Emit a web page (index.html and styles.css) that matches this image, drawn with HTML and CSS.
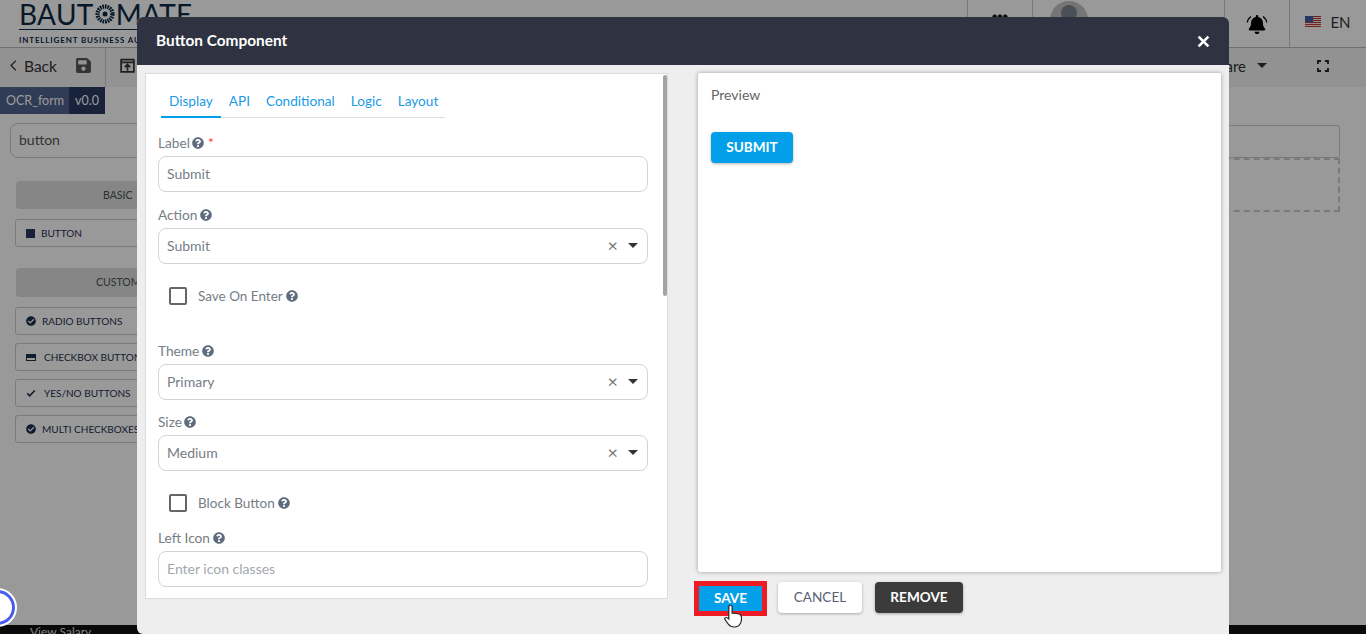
FILE: index.html
```html
<!DOCTYPE html>
<html>
  <head>
    <meta charset="utf-8">
    <title>Button Component</title>
    <link rel="stylesheet" href="styles.css">
  </head>
  <body>
    <svg class="sprites" width="0" height="0">
      <symbol id="help" viewBox="0 0 512 512"><path d="M504 256c0 136.997-111.043 248-248 248S8 392.997 8 256C8 119.083 119.043 8 256 8s248 111.083 248 248zM262.655 90c-54.497 0-89.255 22.957-116.549 63.758-3.536 5.286-2.353 12.415 2.715 16.258l34.699 26.31c5.205 3.947 12.621 3.008 16.665-2.122 17.864-22.658 30.113-35.797 57.303-35.797 20.429 0 45.698 13.148 45.698 32.958 0 14.976-12.363 22.667-32.534 33.976C247.128 238.528 216 254.941 216 296v4c0 6.627 5.373 12 12 12h56c6.627 0 12-5.373 12-12v-1.333c0-28.462 83.186-29.647 83.186-106.667 0-58.002-60.165-102-116.531-102zM256 338c-25.365 0-46 20.635-46 46 0 25.364 20.635 46 46 46s46-20.636 46-46c0-25.365-20.635-46-46-46z"/></symbol>
      <symbol id="check-circle" viewBox="0 0 512 512"><path d="M504 256c0 136.967-111.033 248-248 248S8 392.967 8 256 119.033 8 256 8s248 111.033 248 248zM227.314 387.314l184-184c6.248-6.248 6.248-16.379 0-22.627l-22.627-22.627c-6.248-6.249-16.379-6.249-22.628 0L216 308.118l-70.059-70.059c-6.248-6.248-16.379-6.248-22.628 0l-22.627 22.627c-6.248 6.248-6.248 16.379 0 22.627l104 104c6.249 6.249 16.379 6.249 22.628 0z"/></symbol>
    </svg>

    <div class="page">
      <header class="topbar">
        <div class="logo">
          <div class="logo-name">BAUT<svg class="logo-gear" viewBox="0 0 24 24"><circle cx="12" cy="12" r="9" fill="none" stroke="#0c2a45" stroke-width="5" stroke-dasharray="2 1"/><circle cx="12" cy="12" r="3" fill="#0c2a45"/></svg>MATE</div>
          <div class="logo-rule"></div>
          <div class="logo-tag">INTELLIGENT BUSINESS AUTOMATION</div>
        </div>
        <div class="top-cell top-apps"><span class="dots"></span></div>
        <div class="top-cell top-user">
          <svg class="avatar" viewBox="0 0 38 38"><circle cx="19" cy="19" r="19" fill="#c4c4c4"/><ellipse cx="19" cy="12" rx="8" ry="8" fill="#7c8590"/><path d="M6 30c2-8 24-8 26 0v8H6z" fill="#7c8590"/></svg>
        </div>
        <div class="top-cell top-bell">
          <svg class="bell" viewBox="-90 0 628 512">
            <path d="M224 512c35.320 0 63.970-28.650 63.970-64H160.030c0 35.350 28.650 64 63.970 64zm215.390-149.710c-19.320-20.760-55.470-51.990-55.470-154.290 0-77.700-54.480-139.900-127.940-155.160V32c0-17.670-14.320-32-31.980-32s-31.980 14.330-31.980 32v20.840C118.560 68.100 64.080 130.300 64.080 208c0 102.300-36.150 133.530-55.470 154.290-6 6.450-8.660 14.160-8.610 21.710.11 16.400 12.980 32 32.100 32h383.800c19.120 0 32-15.600 32.100-32 .05-7.550-2.610-15.270-8.610-21.710z"/>
            <path d="M60 40C10 80-30 130-40 200M388 40c50 40 90 90 100 160" fill="none" stroke="#000" stroke-width="36"/>
          </svg>
        </div>
        <div class="top-cell top-lang"><span class="flag"><span class="flag-canton"></span></span>EN</div>
      </header>

      <div class="toolbar">
        <div class="tool-left">
          <svg class="chev" viewBox="0 0 10 16"><path d="M8 2 2 8l6 6" fill="none" stroke="#333" stroke-width="1.600"/></svg>
          <span class="back">Back</span>
          <svg class="save" viewBox="0 0 448 512"><path d="M433.941 129.941l-83.882-83.882A48 48 0 0 0 316.118 32H48C21.490 32 0 53.490 0 80v352c0 26.510 21.490 48 48 48h352c26.510 0 48-21.490 48-48V163.882a48 48 0 0 0-14.059-33.941zM224 416c-35.346 0-64-28.654-64-64 0-35.346 28.654-64 64-64s64 28.654 64 64c0 35.346-28.654 64-64 64zm96-304.520V212c0 6.627-5.373 12-12 12H76c-6.627 0-12-5.373-12-12V108c0-6.627 5.373-12 12-12h228.520c3.183 0 6.235 1.264 8.485 3.515l3.480 3.480A11.996 11.996 0 0 1 320 111.480z"/></svg>
        </div>
        <svg class="publish" viewBox="0 0 16 16"><path d="M2 5V2.500h12V14H2V5zm0 0h12M8 13V7M5.500 9.500 8 7l2.500 2.500" fill="none" stroke="#333" stroke-width="1.600"/></svg>
        <div class="tool-right">
          <span class="share">Share</span>
          <span class="caret"></span>
          <svg class="fullscreen" viewBox="0 0 12 12"><path d="M1 4V1h3M8 1h3v3M11 8v3H8M4 11H1V8" fill="none" stroke="#222" stroke-width="1.800"/></svg>
        </div>
      </div>

      <div class="crumbs">
        <span class="crumb-name">OCR_form</span>
        <span class="crumb-version">v0.0</span>
      </div>

      <main class="builder">
        <aside class="palette">
          <div class="palette-search">button</div>
          <div class="palette-head">BASIC</div>
          <div class="palette-item"><span class="item-square"></span>BUTTON</div>
          <div class="palette-head palette-gap">CUSTOM</div>
          <div class="palette-item"><svg class="item-icon"><use href="#check-circle"/></svg>RADIO BUTTONS</div>
          <div class="palette-item item-wide"><span class="item-list"></span>CHECKBOX BUTTONS</div>
          <div class="palette-item item-wide"><svg class="item-icon" viewBox="0 0 12 12"><path d="M1.500 6.500 4.500 9.500 10.500 3" fill="none" stroke="#1f2f4f" stroke-width="2"/></svg>YES/NO BUTTONS</div>
          <div class="palette-item"><svg class="item-icon"><use href="#check-circle"/></svg>MULTI CHECKBOXES</div>
        </aside>
        <section class="canvas">
          <div class="canvas-title"></div>
          <div class="canvas-drop"></div>
        </section>
      </main>

      <footer class="footer">View Salary</footer>
    </div>

    <div class="backdrop"></div>
    <div class="assistant"></div>

    <div class="modal">
      <div class="modal-head">
        <span class="modal-title">Button Component</span>
        <svg class="modal-close" viewBox="0 0 12 12"><path d="M1.500 1.500l9 9M10.500 1.500l-9 9" stroke="#fff" stroke-width="2.400"/></svg>
      </div>
      <div class="modal-body">
        <div class="settings">
          <span class="scrollbar"></span>
          <nav class="tabs">
            <a class="tab active">Display</a>
            <a class="tab">API</a>
            <a class="tab">Conditional</a>
            <a class="tab">Logic</a>
            <a class="tab">Layout</a>
          </nav>

          <div class="field first">
            <label class="label">Label <svg class="help"><use href="#help"/></svg> <span class="req">*</span></label>
            <div class="input">Submit</div>
          </div>
          <div class="field">
            <label class="label">Action <svg class="help"><use href="#help"/></svg></label>
            <div class="input select">Submit<span class="clear">×</span><span class="arrow"></span></div>
          </div>
          <div class="check check-save"><span class="box"></span>Save On Enter <svg class="help"><use href="#help"/></svg></div>
          <div class="field">
            <label class="label">Theme <svg class="help"><use href="#help"/></svg></label>
            <div class="input select">Primary<span class="clear">×</span><span class="arrow"></span></div>
          </div>
          <div class="field tight">
            <label class="label">Size <svg class="help"><use href="#help"/></svg></label>
            <div class="input select">Medium<span class="clear">×</span><span class="arrow"></span></div>
          </div>
          <div class="check check-block"><span class="box"></span>Block Button <svg class="help"><use href="#help"/></svg></div>
          <div class="field">
            <label class="label">Left Icon <svg class="help"><use href="#help"/></svg></label>
            <div class="input placeholder">Enter icon classes</div>
          </div>
        </div>

        <div class="side">
          <div class="preview">
            <div class="preview-title">Preview</div>
            <button class="btn btn-primary btn-submit">SUBMIT</button>
          </div>
          <div class="actions">
            <div class="save-mark"><button class="btn btn-primary btn-save">SAVE</button></div>
            <button class="btn btn-cancel">CANCEL</button>
            <button class="btn btn-remove">REMOVE</button>
          </div>
        </div>
      </div>
    </div>

    <svg class="cursor" viewBox="0 0 15 24" preserveAspectRatio="none"><path d="M4.500 1.500c1-.7 2.300 0 2.300 1.300v6.500c1.800-.4 6.200.3 7.200 1.800 1 2 .8 6.500-.5 8.600-.7 2-2.800 3.300-5 3.300-2.500 0-4-1.300-5-3L.8 15.500c-.8-1.300.8-2.600 2-1.600l1.200 1.100V2.800c0-.5.100-1 .5-1.300z" fill="#fff" stroke="#222" stroke-width="1"/></svg>
  </body>
</html>
```

FILE: styles.css
```css
* {
  box-sizing: border-box;
}

html,
body {
  height: 100%;
  margin: 0;
  overflow: hidden;
}

body {
  font-family: "Lato", "Noto Sans", sans-serif;
  font-size: 14px;
  color: #555;
  background: #fff;
}

.sprites {
  position: absolute;
}

/* page behind the dialog */

.page {
  display: flex;
  flex-direction: column;
  height: 634px;
}

.topbar {
  display: flex;
  height: 48px;
  flex: none;
  border-bottom: 1px solid #bbb;
}

.logo {
  width: 967px;
  padding: 0 0 0 19px;
  overflow: hidden;
  color: #0c2a45;
}

.logo-name {
  display: flex;
  align-items: center;
  height: 30px;
  margin-top: -1px;
  font-size: 28px;
  letter-spacing: .3px;
}

.logo-gear {
  width: 20px;
  height: 20px;
  margin: 0 1px;
}

.logo-rule {
  width: 200px;
  height: 1px;
  background: #0c2a45;
}

.logo-tag {
  margin-top: 5px;
  font-size: 8px;
  font-weight: 700;
  letter-spacing: .85px;
}

.top-cell {
  display: flex;
  align-items: center;
  justify-content: center;
  border-left: 1px solid #c8c8c8;
}

.top-apps {
  width: 65px;
}

.dots {
  width: 16px;
  height: 16px;
  margin-bottom: 4px;
  background: radial-gradient(circle, #111 2px, transparent 2.500px) 0 0 / 5.300px 5.300px;
}

.top-user {
  width: 192px;
  justify-content: flex-start;
  padding-left: 17px;
}

.avatar {
  width: 38px;
  height: 38px;
  margin-top: -8px;
}

.top-bell {
  width: 65px;
}

.bell {
  width: 24px;
  height: 19px;
  margin-top: 2px;
  fill: #000;
}

.top-lang {
  flex: 1;
  gap: 9px;
  padding-bottom: 4px;
  font-size: 15px;
  color: #333;
}

.flag {
  position: relative;
  width: 16px;
  height: 11px;
  background: repeating-linear-gradient(#c0392b 0 1px, #eee 1px 2px);
}

.flag-canton {
  position: absolute;
  left: 0;
  top: 0;
  width: 8px;
  height: 6px;
  background: #3c5aa6;
}

.toolbar {
  display: flex;
  align-items: center;
  height: 39px;
  flex: none;
  background: #f4f4f4;
  color: #333;
}

.tool-left {
  display: flex;
  align-items: center;
  width: 106px;
  height: 100%;
  padding: 0 0 4px 9px;
  border-right: 1px solid #ccc;
}

.chev {
  width: 9px;
  height: 13px;
}

.back {
  margin-left: 6px;
  font-size: 15.500px;
}

.save {
  width: 15px;
  height: 17px;
  margin-left: 19px;
  fill: #555;
}

.publish {
  width: 17px;
  height: 17px;
  margin: 0 0 4px 13px;
}

.tool-right {
  display: flex;
  align-items: center;
  margin: 0 0 4px auto;
  padding-right: 37px;
}

.share {
  font-size: 15px;
}

.caret {
  width: 0;
  height: 0;
  margin-left: 11px;
  border: 5px solid transparent;
  border-top-color: #333;
  border-bottom-width: 0;
}

.fullscreen {
  width: 12px;
  height: 12px;
  margin-left: 50px;
}

.crumbs {
  display: flex;
  height: 27px;
  flex: none;
  line-height: 27px;
  color: #fff;
  font-size: 12.500px;
}

.crumb-name {
  width: 69px;
  padding-left: 6px;
  background: #50658f;
  white-space: nowrap;
}

.crumb-version {
  width: 36px;
  text-align: center;
  background: #2a3a63;
}

.builder {
  display: flex;
  flex: 1;
  min-height: 0;
}

.palette {
  width: 300px;
  padding: 9px 0 0 10px;
  font-size: 10px;
  color: #1f2f4f;
}

.palette-search {
  height: 35px;
  margin-bottom: 23px;
  padding-left: 8px;
  border: 1px solid #ccc;
  border-radius: 8px;
  font-size: 14px;
  line-height: 31px;
  color: #555;
}

.palette-head {
  height: 28px;
  margin: 0 0 10px 6px;
  border-radius: 4px;
  background: #e0e0e0;
  font-size: 10.500px;
  line-height: 28px;
  padding-left: 87px;
  color: #455;
}

.palette-gap {
  margin-top: 21px;
  margin-bottom: 10px;
  height: 29px;
  padding-left: 80px;
}

.palette-item {
  display: flex;
  align-items: center;
  gap: 6px;
  height: 28px;
  margin: 0 0 8px 5px;
  padding-left: 10px;
  border: 1px solid #ccc;
  border-radius: 3px;
}

.item-wide {
  gap: 8px;
}

.item-square {
  width: 9px;
  height: 9px;
  background: #2a3a63;
}

.item-icon {
  width: 10px;
  height: 10px;
  fill: #1f2f4f;
}

.item-list {
  width: 10px;
  height: 7px;
  border: 1px solid #1f2f4f;
  border-top-width: 2px;
  background: linear-gradient(#1f2f4f 0 2px, transparent 2px);
}

.canvas {
  flex: 1;
  padding: 11px 26px 0 0;
}

.canvas-title {
  height: 33px;
  border: 1px solid #ccc;
  border-radius: 3px;
}

.canvas-drop {
  height: 54px;
  border: 2px dashed #ccc;
}

.footer {
  height: 9px;
  flex: none;
  padding-left: 30px;
  background: #111;
  color: #ddd;
  font-size: 12px;
  line-height: 14px;
  overflow: hidden;
}

/* overlay parts */

.backdrop {
  position: fixed;
  top: 0;
  right: 0;
  bottom: 0;
  left: 0;
  background: rgba(0, 0, 0, .4);
}

.assistant {
  position: fixed;
  left: -20px;
  top: 590px;
  width: 35px;
  height: 35px;
  border: 3px solid #4a5cf0;
  border-radius: 50%;
  background: #fff;
  box-shadow: 0 0 0 2px #fff;
}

.modal {
  position: fixed;
  left: 137px;
  top: 17px;
  width: 1092px;
  height: 617px;
  border-radius: 6px 6px 0 6px;
  background: #eee;
  overflow: hidden;
}

.modal-head {
  display: flex;
  align-items: center;
  justify-content: space-between;
  height: 48px;
  padding: 0 19px;
  background: #2f3240;
  color: #fff;
}

.modal-title {
  margin-bottom: 2px;
  font-size: 15.400px;
  font-weight: 700;
}

.modal-close {
  width: 13px;
  height: 13px;
}

.modal-body {
  display: flex;
  align-items: flex-start;
  padding: 8px 8px 0;
  gap: 30px;
}

.settings {
  position: relative;
  width: 523px;
  height: 526px;
  flex: none;
  padding: 0 19px 0 12px;
  border: 1px solid #ddd;
  background: #fff;
  overflow: hidden;
  color: #767d85;
}

.scrollbar {
  position: absolute;
  right: 0;
  top: 1px;
  width: 4px;
  height: 221px;
  border-radius: 2px;
  background: #a3a3a3;
}

.tabs {
  display: flex;
  width: 284px;
  height: 35px;
  margin: 9px 0 0 3px;
  border-bottom: 1px solid #ddd;
  font-size: 13.600px;
  color: #1a9be8;
}

.tab {
  height: 35px;
  padding: 8px 8px 0;
  line-height: 20px;
}

.tab.active {
  border-bottom: 2px solid #03a0e9;
}

.field {
  margin-top: 12px;
}

.field.first {
  margin-top: 14px;
}

.field.tight {
  margin-top: 11px;
}

.label {
  display: block;
  height: 24px;
  line-height: 22px;
  font-size: 13.700px;
  color: #767d85;
}

.help {
  width: 12px;
  height: 12px;
  margin-left: -1px;
  vertical-align: -1px;
  fill: #5f6b7e;
}

.req {
  color: #f33;
}

.input {
  display: flex;
  align-items: center;
  height: 36px;
  padding: 0 9px 2px 8px;
  border: 1px solid #ced4da;
  border-radius: 8px;
  color: #767d85;
}

.placeholder {
  color: #a3a8b0;
}

.clear {
  margin-left: auto;
  font-size: 18px;
  color: #777;
}

.arrow {
  width: 0;
  height: 0;
  margin-left: 10px;
  border: 5.500px solid transparent;
  border-top-color: #333;
  border-bottom-width: 0;
}

.check {
  display: flex;
  align-items: center;
  gap: 4px;
  height: 18px;
  padding-left: 11px;
  font-size: 13.500px;
}

.box {
  width: 18px;
  height: 18px;
  margin-right: 7px;
  border: 2px solid #666;
  border-radius: 2px;
}

.check-save {
  margin: 23px 0 35px;
}

.check-block {
  margin: 23px 0 15px;
}

.check + .field {
  margin-top: 0;
}

.side {
  width: 523px;
  flex: none;
}

.preview {
  height: 499px;
  padding: 13px;
  border-radius: 2px;
  background: #fff;
  box-shadow: 0 0 4px rgba(0, 0, 0, .35);
  color: #666;
}

.preview-title {
  height: 46px;
  line-height: 18px;
}

.btn {
  height: 31px;
  padding: 0 0 2px;
  border: 0;
  border-radius: 4px;
  font-family: inherit;
  font-size: 13.600px;
  font-weight: 700;
  box-shadow: 0 1px 3px rgba(0, 0, 0, .3);
}

.btn-primary {
  background: #03a0e9;
  color: #fff;
}

.btn-submit {
  width: 82px;
}

.actions {
  display: flex;
  align-items: flex-start;
  margin: 10px 0 0 -4px;
}

.save-mark {
  width: 73px;
  height: 35px;
  margin-top: -1px;
  padding: 5px;
  background: #ed1c24;
}

.btn-save {
  display: block;
  width: 63px;
  height: 25px;
  border-radius: 0;
  box-shadow: none;
}

.btn-cancel {
  width: 84px;
  margin-left: 11px;
  background: #fff;
  color: #5a6072;
  font-weight: 400;
}

.btn-remove {
  width: 88px;
  margin-left: 13px;
  background: #3b3b3b;
  color: #fff;
}

.cursor {
  position: fixed;
  left: 724px;
  top: 604px;
  width: 18px;
  height: 24px;
}
```
